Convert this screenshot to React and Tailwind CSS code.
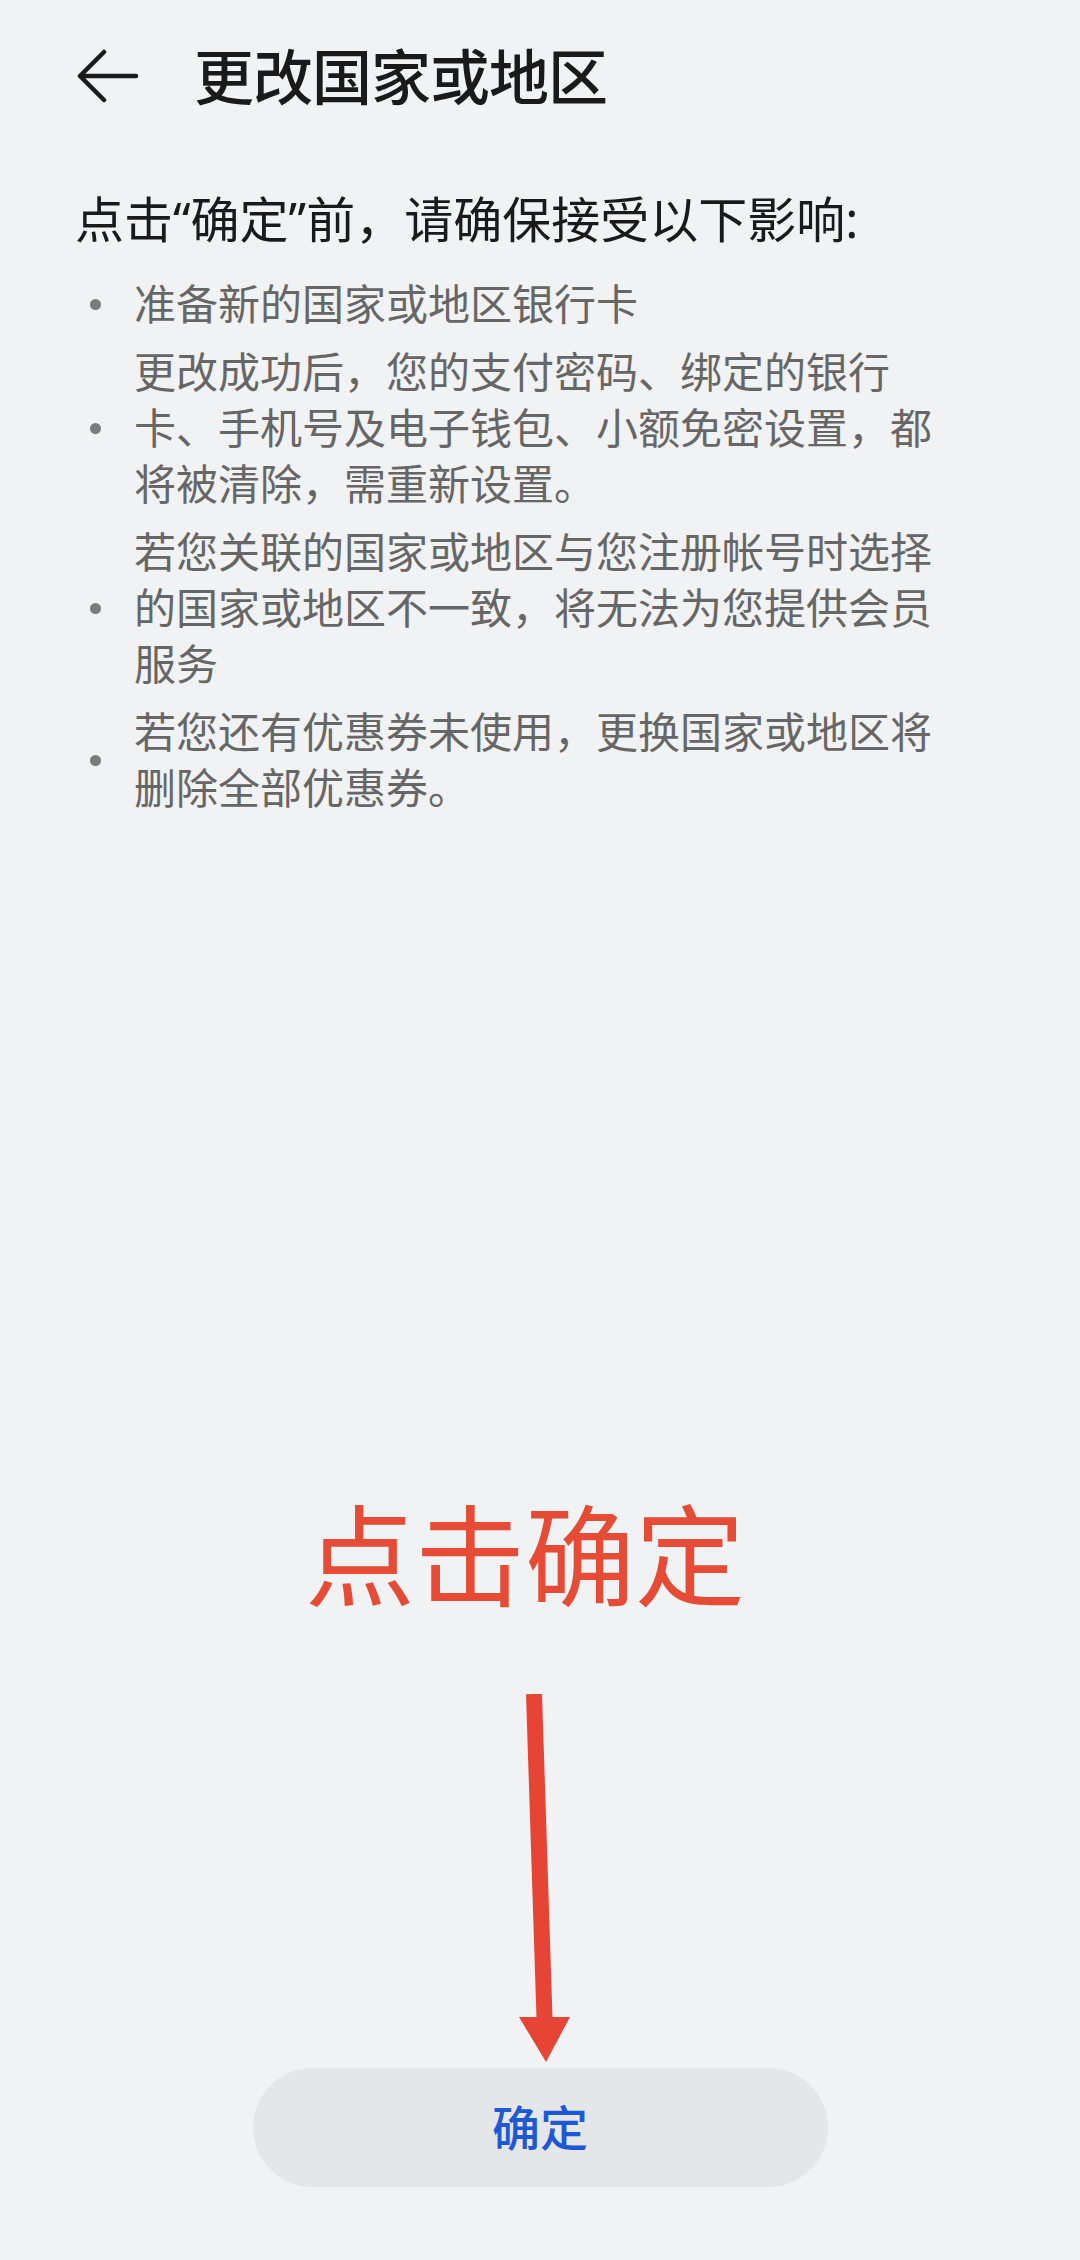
const bullets = [
  "准备新的国家或地区银行卡",
  "更改成功后，您的支付密码、绑定的银行卡、手机号及电子钱包、小额免密设置，都将被清除，需重新设置。",
  "若您关联的国家或地区与您注册帐号时选择的国家或地区不一致，将无法为您提供会员服务",
  "若您还有优惠券未使用，更换国家或地区将删除全部优惠券。",
];

const font = {
  fontFamily: '"Noto Sans", "Noto Sans CJK SC", sans-serif',
};

export default function App() {
  return (
    <div
      className="w-[1080px] h-[2260px] bg-[#f1f2f4] flex flex-col overflow-hidden"
      style={font}
    >
      {/* Header */}
      <div className="h-[154px] flex items-center pl-[77px] shrink-0">
        <svg width="62" height="56" viewBox="0 0 62 56" className="shrink-0">
          <path
            d="M27 3 L3 27 L27 51 M3 27 L59 27"
            fill="none"
            stroke="#1a1a1a"
            strokeWidth="4.5"
            strokeLinecap="round"
            strokeLinejoin="round"
          />
        </svg>
        <div className="ml-[55px] text-[60px] leading-none font-medium text-[#1a1a1a] tracking-[-1px]">
          更改国家或地区
        </div>
      </div>

      {/* Intro */}
      <div className="mt-[33px] pl-[75px] text-[49px] leading-[64px] text-[#1a1a1a]">
        点击“确定”前，请确保接受以下影响:
      </div>

      {/* Bullet list */}
      <div className="mt-[25px] flex flex-col gap-[12px]">
        {bullets.map((b) => (
          <div key={b} className="flex items-center">
            <div className="w-[134px] shrink-0 flex items-center pl-[90px]">
              <div className="w-[11px] h-[11px] rounded-full bg-[#7b7b7b]" />
            </div>
            <div className="w-[815px] text-[42px] leading-[56px] text-[#666666]">
              {b}
            </div>
          </div>
        ))}
      </div>

      {/* Annotation */}
      <div className="mt-[684px] pl-[305px] text-[110px] leading-[110px] text-[#e64b35] font-normal">
        点击确定
      </div>

      <div className="mt-[84px] pl-[510px] shrink-0">
        <svg width="70" height="368" viewBox="0 0 70 368">
          <path d="M24 0 L34.5 324" stroke="#e64536" strokeWidth="16" fill="none" />
          <polygon points="9,323 60,323 36,368" fill="#e64536" />
        </svg>
      </div>

      {/* Confirm button */}
      <div className="mt-[6px] flex justify-center shrink-0">
        <button className="w-[575px] h-[119px] rounded-full bg-[#e5e6e8] text-[#1d58d5] text-[48px] font-medium leading-none">
          确定
        </button>
      </div>
    </div>
  );
}
